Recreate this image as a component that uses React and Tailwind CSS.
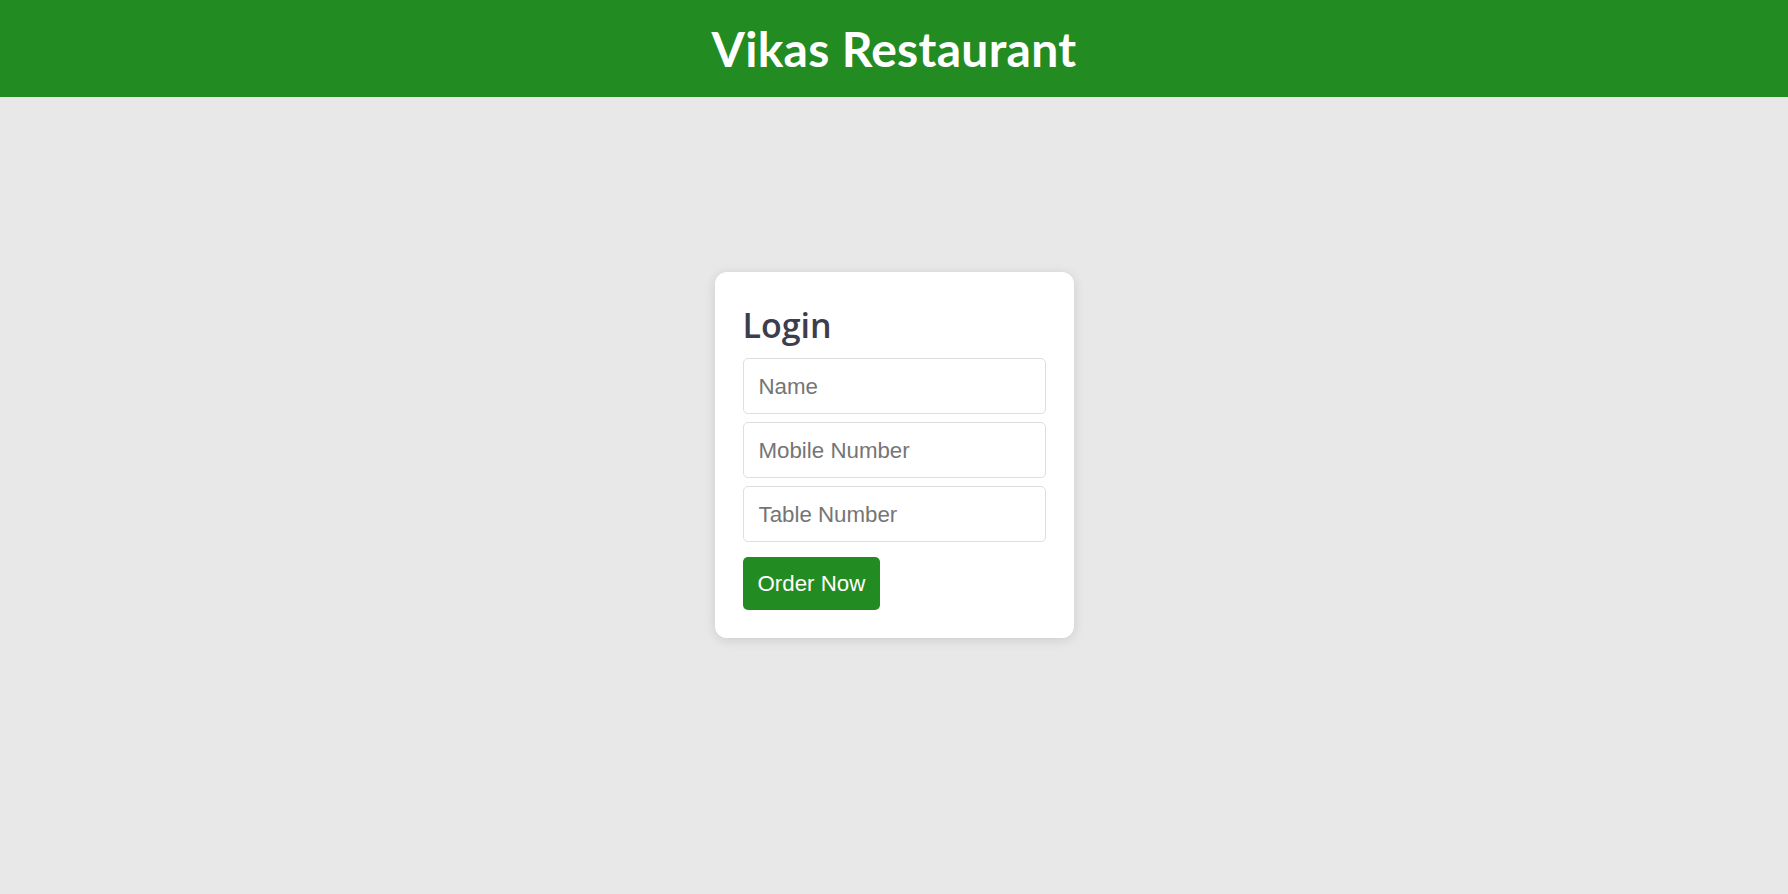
import React, { useState } from 'react';

const App = () => {
  const [form, setForm] = useState({ name: '', mobile: '', table: '' });

  const update = (key) => (e) => setForm({ ...form, [key]: e.target.value });

  return (
    <div className="min-h-screen bg-[#e8e8e8] font-['Liberation_Sans',Arial,sans-serif]">
      {/* --- HEADER --- */}
      <header className="h-[97px] bg-[#228b22] flex items-center justify-center">
        <h1 className="text-white text-[48px] font-bold font-['Lato',sans-serif] leading-none tracking-[0.3px]">Vikas Restaurant</h1>
      </header>

      {/* --- LOGIN CARD --- */}
      <div className="flex justify-center pt-[175px]">
        <div className="w-[359px] bg-white rounded-[12px] shadow-[0_2px_12px_rgba(0,0,0,0.12)] px-[28px] pt-[30px] pb-[28px]">
          <h2 className="text-[34px] leading-[47px] font-semibold text-[#3d3d4e] font-['Open_Sans',sans-serif] mb-[9px]">Login</h2>

          <div className="flex flex-col gap-[8px]">
            <input
              type="text"
              placeholder="Name"
              value={form.name}
              onChange={update('name')}
              className="h-[56px] w-full border border-[#dedede] rounded-[5px] px-[15px] pt-[2px] text-[22.3px] text-[#333] placeholder:text-[#757575] outline-none"
            />
            <input
              type="text"
              placeholder="Mobile Number"
              value={form.mobile}
              onChange={update('mobile')}
              className="h-[56px] w-full border border-[#dedede] rounded-[5px] px-[15px] pt-[2px] text-[22.3px] text-[#333] placeholder:text-[#757575] outline-none"
            />
            <input
              type="text"
              placeholder="Table Number"
              value={form.table}
              onChange={update('table')}
              className="h-[56px] w-full border border-[#dedede] rounded-[5px] px-[15px] pt-[2px] text-[22.3px] text-[#333] placeholder:text-[#757575] outline-none"
            />
          </div>

          <button className="mt-[15px] h-[53px] px-[15px] bg-[#228b22] text-white text-[22.3px] rounded-[5px]">
            Order Now
          </button>
        </div>
      </div>
    </div>
  );
};

export default App;
